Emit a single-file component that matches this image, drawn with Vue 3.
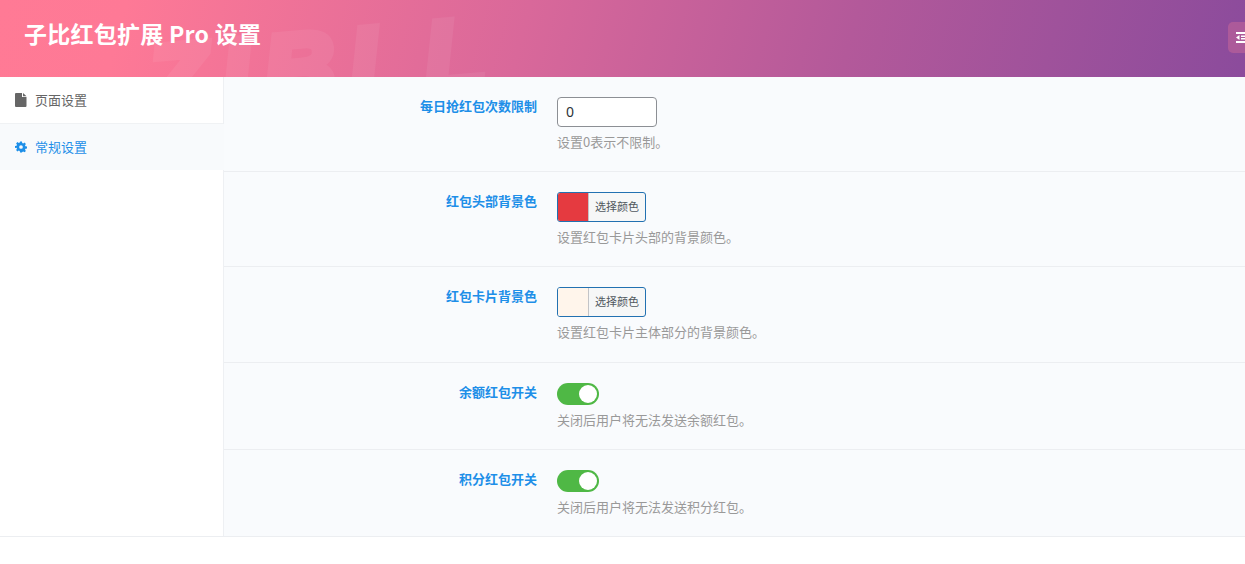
<script setup>
const rows = [
  { label: '每日抢红包次数限制', type: 'input', value: '0', desc: '设置0表示不限制。' },
  { label: '红包头部背景色', type: 'color', color: '#e53a40', desc: '设置红包卡片头部的背景颜色。' },
  { label: '红包卡片背景色', type: 'color', color: '#fff5eb', desc: '设置红包卡片主体部分的背景颜色。' },
  { label: '余额红包开关', type: 'toggle', desc: '关闭后用户将无法发送余额红包。' },
  { label: '积分红包开关', type: 'toggle', desc: '关闭后用户将无法发送积分红包。' }
]
</script>

<template>
  <div class="page">
    <header class="head">
      <span class="mark">ZIBLL</span>
      <h1 class="title">子比红包扩展 Pro 设置</h1>
      <button class="side-btn" type="button" aria-label="menu">
        <svg width="14" height="11" viewBox="0 0 14 11">
          <path fill="#fff" d="M0 0h14v2H0zM5 3.500h9v1.500H5zM5 6h9v1.500H5zM0 9h14v2H0zM3.500 3v5L0 5.500z" />
        </svg>
      </button>
    </header>
    <div class="body">
      <nav class="nav">
        <a class="nav-item">
          <svg class="nav-icon" viewBox="0 0 12 14" width="12" height="14">
            <path fill="#666" d="M0 1a1 1 0 0 1 1-1h6v4h4.500v9a1 1 0 0 1-1 1H1a1 1 0 0 1-1-1zM8 0l3.500 3.300H8z" />
          </svg>
          <span class="nav-text">页面设置</span>
        </a>
        <a class="nav-item active">
          <svg class="nav-icon" viewBox="-1 0 26 24" width="12" height="12">
            <path fill="#1e8fe8" fill-rule="evenodd" d="M10 0h4l.7 3.400 2.100.9 2.900-1.900 2.900 2.900-1.900 2.900.9 2.100 3.400.7v4l-3.400.7-.9 2.100 1.900 2.900-2.900 2.900-2.900-1.900-2.100.9L14 24h-4l-.7-3.400-2.100-.9-2.900 1.900-2.900-2.900 1.900-2.900-.9-2.100L-1 14v-4l3.400-.7.9-2.100L1.400 4.300l2.900-2.900 2.900 1.900 2.100-.9zM12 8a4 4 0 1 0 0 8 4 4 0 0 0 0-8z" />
          </svg>
          <span class="nav-text">常规设置</span>
        </a>
      </nav>
      <main class="content">
        <section v-for="row in rows" :key="row.label" class="row">
          <label class="label">{{ row.label }}</label>
          <div class="field">
            <input v-if="row.type === 'input'" class="num" :value="row.value" />
            <div v-else-if="row.type === 'color'" class="picker">
              <span class="swatch" :style="{ background: row.color }"></span>
              <span class="pick-text">选择颜色</span>
            </div>
            <div v-else class="toggle"><span class="knob"></span></div>
            <p class="desc">{{ row.desc }}</p>
          </div>
        </section>
      </main>
    </div>
  </div>
</template>

<style>
html, body { margin: 0; background: #fff; overflow: hidden; }
</style>

<style scoped>
.page {
  width: 1245px;
  height: 564px;
  overflow: hidden;
  background: #fff;
  font-family: "Noto Sans CJK SC", "Noto Sans", sans-serif;
}
.head {
  position: relative;
  height: 77px;
  display: flex;
  align-items: center;
  padding-left: 24px;
  overflow: hidden;
  background: linear-gradient(105deg, #ff7a95 0%, #fe7996 10%, #d9689a 42%, #b3599a 68%, #8b4b9c 100%);
}
.mark {
  position: absolute;
  left: 146px;
  top: 6px;
  font: italic 700 100px/120px "Liberation Sans", sans-serif;
  letter-spacing: 14px;
  color: #fff;
  -webkit-text-stroke: 8px #fff;
  opacity: .06;
  white-space: nowrap;
  transform: rotate(-5deg);
}
.title {
  position: relative;
  margin: 0 0 12px;
  font-size: 23px;
  font-weight: 700;
  line-height: 30px;
  letter-spacing: .25px;
  color: #fff;
}
.side-btn {
  position: relative;
  display: flex;
  align-items: center;
  justify-content: flex-start;
  flex: none;
  width: 34px;
  height: 31px;
  margin: -2px -17px 0 auto;
  padding: 0 0 0 8px;
  border: 0;
  border-radius: 5px;
  background: rgba(255, 130, 150, .28);
}
.body {
  display: flex;
  box-sizing: border-box;
  height: 460px;
  align-items: stretch;
  border-bottom: 1px solid #eceef1;
}
.nav {
  flex: none;
  box-sizing: content-box;
  width: 223px;
  border-right: 1px solid #eef0f3;
}
.nav-item {
  display: flex;
  align-items: center;
  gap: 8px;
  height: 46px;
  padding-left: 15px;
  font-size: 13px;
  color: #666;
  border-bottom: 1px solid #f0f2f4;
}
.nav-item.active {
  box-sizing: border-box;
  width: 224px;
  height: 46px;
  background: #f8fafc;
  color: #1e8fe8;
  border-bottom: 0;
}
.nav-icon { flex: none; }
.nav-text { margin-top: -2px; }
.content {
  flex: 1;
  background: #f9fbfd;
}
.row {
  display: grid;
  grid-template-columns: 313px 1fr;
  column-gap: 20px;
  padding: 20px 0 0;
  box-sizing: border-box;
  border-bottom: 1px solid #eceef1;
}
.row:nth-child(1) { height: 95px; }
.row:nth-child(2) { height: 95px; }
.row:nth-child(3) { height: 96px; }
.row:nth-child(4) { height: 87px; }
.row:nth-child(5) { height: 86px; border-bottom: 0; }
.label {
  text-align: right;
  font-size: 13px;
  font-weight: 700;
  line-height: 17px;
  color: #1e8fe8;
}
.field { min-width: 0; }
.num {
  display: block;
  box-sizing: border-box;
  width: 100px;
  height: 30px;
  padding: 0 8px 2px;
  border: 1px solid #8c8f94;
  border-radius: 4px;
  background: #fff;
  font-family: "Noto Sans", sans-serif;
  font-size: 14px;
  color: #2c3338;
  outline: 0;
}
.picker {
  display: flex;
  box-sizing: border-box;
  width: 89px;
  height: 30px;
  border: 1px solid #2271b1;
  border-radius: 3px;
  overflow: hidden;
  background: #f6f7f7;
}
.swatch {
  width: 30px;
  border-right: 1px solid #c3c4c7;
}
.pick-text {
  flex: 1;
  text-align: center;
  font-size: 11px;
  line-height: 26px;
  color: #50575e;
}
.toggle {
  position: relative;
  width: 42px;
  height: 22px;
  border-radius: 11px;
  background: #4fb845;
}
.knob {
  position: absolute;
  top: 2px;
  right: 2px;
  width: 18px;
  height: 18px;
  border-radius: 50%;
  background: #fff;
}
.desc {
  margin: 5px 0 0;
  font-size: 13px;
  line-height: 20px;
  color: #999;
}
</style>
